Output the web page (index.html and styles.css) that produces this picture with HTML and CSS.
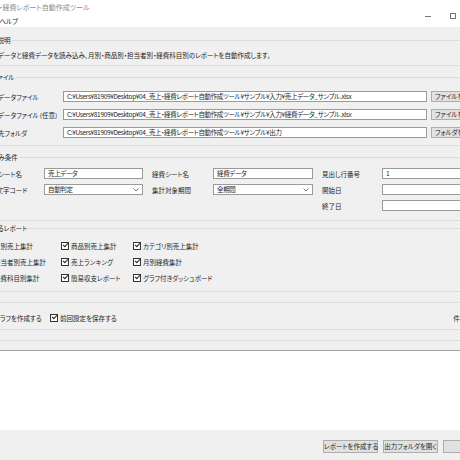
FILE: index.html
```html
<!DOCTYPE html>
<html lang="ja">
<head>
  <meta charset="UTF-8">
  <title>売上・経費レポート自動作成ツール</title>
  <link rel="stylesheet" href="styles.css">
</head>
<body>
  <div class="window">
    <header class="top">
      <div class="top-left">
        <div class="title">売上・経費レポート自動作成ツール</div>
        <nav class="menu"><span>ファイル</span><span>ヘルプ</span></nav>
      </div>
      <div class="controls">
        <span class="ctl"><svg width="6" height="6" viewBox="0 0 6 6"><path d="M0 3.5h6" stroke="#777" stroke-width="1"/></svg></span>
        <span class="ctl"><svg width="6" height="6" viewBox="0 0 6 6"><rect x="0.5" y="0.5" width="5" height="5" fill="none" stroke="#777" stroke-width="1"/></svg></span>
        <span class="ctl"><svg width="6" height="6" viewBox="0 0 6 6"><path d="M0 0l6 6M6 0l-6 6" stroke="#777" stroke-width="1"/></svg></span>
      </div>
    </header>

    <main class="content">
      <fieldset class="group g-desc">
        <legend>ツール説明</legend>
        <p class="desc">売上データと経費データを読み込み、月別・商品別・担当者別・経費科目別のレポートを自動作成します。</p>
      </fieldset>

      <fieldset class="group g-files">
        <legend>入力ファイル</legend>
        <div class="files">
          <span class="lbl">売上データファイル</span>
          <div class="field">C:¥Users¥81909¥Desktop¥04_売上・経費レポート自動作成ツール¥サンプル¥入力¥売上データ_サンプル.xlsx</div>
          <button class="btn">ファイルを選択</button>

          <span class="lbl">経費データファイル（任意）</span>
          <div class="field">C:¥Users¥81909¥Desktop¥04_売上・経費レポート自動作成ツール¥サンプル¥入力¥経費データ_サンプル.xlsx</div>
          <button class="btn">ファイルを選択</button>

          <span class="lbl">出力先フォルダ</span>
          <div class="field">C:¥Users¥81909¥Desktop¥04_売上・経費レポート自動作成ツール¥サンプル¥出力</div>
          <button class="btn">フォルダを選択</button>
        </div>
      </fieldset>

      <fieldset class="group g-cond">
        <legend>読み込み条件</legend>
        <div class="cond">
          <span class="lbl">売上シート名</span>
          <div class="field">売上データ</div>
          <span class="lbl pad">経費シート名</span>
          <div class="field">経費データ</div>
          <span class="lbl pad">見出し行番号</span>
          <div class="field">1</div>

          <span class="lbl">CSV文字コード</span>
          <div class="field combo">自動判定<svg class="chev" width="6" height="4" viewBox="0 0 6 4"><path d="M0.5 0.5l2.5 2.5l2.5-2.5" fill="none" stroke="#555" stroke-width="0.8"/></svg></div>
          <span class="lbl pad">集計対象期間</span>
          <div class="field combo">全期間<svg class="chev" width="6" height="4" viewBox="0 0 6 4"><path d="M0.5 0.5l2.5 2.5l2.5-2.5" fill="none" stroke="#555" stroke-width="0.8"/></svg></div>
          <span class="lbl pad">開始日</span>
          <div class="field"></div>

          <span class="lbl pad col5">終了日</span>
          <div class="field"></div>
        </div>
      </fieldset>

      <fieldset class="group g-reports">
        <legend>作成するレポート</legend>
        <div class="reports">
          <label class="chk"><span class="box"></span>月別売上集計</label>
          <label class="chk"><span class="box"></span>商品別売上集計</label>
          <label class="chk"><span class="box"></span>カテゴリ別売上集計</label>
          <label class="chk"><span class="box"></span>担当者別売上集計</label>
          <label class="chk"><span class="box"></span>売上ランキング</label>
          <label class="chk"><span class="box"></span>月別経費集計</label>
          <label class="chk"><span class="box"></span>経費科目別集計</label>
          <label class="chk"><span class="box"></span>簡易収支レポート</label>
          <label class="chk"><span class="box"></span>グラフ付きダッシュボード</label>
        </div>
      </fieldset>

      <fieldset class="group g-opts">
        <div class="opts">
          <label class="chk first"><span class="box"></span>グラフを作成する</label>
          <label class="chk"><span class="box"></span>前回設定を保存する</label>
          <span class="count">件数：0</span>
        </div>
      </fieldset>

      <div class="sep"></div>
      <div class="log"></div>

      <footer class="actions">
        <button class="btn wide">レポートを作成する</button>
        <button class="btn wide">出力フォルダを開く</button>
        <button class="btn wide">終了</button>
      </footer>
    </main>
  </div>
</body>
</html>
```

FILE: styles.css
```css
body {
  margin: 0;
  width: 460px;
  height: 460px;
  overflow: hidden;
  background: #f0f0f0;
  font-family: "Noto Sans CJK JP", "Noto Sans", sans-serif;
  font-feature-settings: "palt";
  font-size: 6.5px;
  line-height: 10px;
  color: #1e1e1e;
}

.window {
  margin-left: -30px;
  width: 540px;
  height: 460px;
}

/* title + menu */
.top {
  height: 27px;
  background: #fff;
  display: flex;
  justify-content: space-between;
}
.top-left {
  padding: 2px 0 0 15px;
}
.title {
  color: #8c8c8c;
  font-size: 7px;
}
.menu {
  display: flex;
  gap: 8px;
  margin: 4px 0 0 -16px;
}
.controls {
  display: flex;
  padding: 6px 20px 0 0;
}
.ctl {
  width: 25px;
  height: 20px;
  display: flex;
  align-items: center;
  justify-content: center;
}

/* group boxes */
.group {
  margin: 6px 6px 0;
  padding: 0 0 8px 8px;
  border: 1px solid #dcdcdc;
  min-width: 0;
}
.group legend {
  margin-left: -7px;
  padding: 0 1px;
  line-height: 10px;
}
.g-desc { margin-top: 8px; padding-bottom: 5px; }
.desc { margin: 5px 0 0; }

.g-files { padding-bottom: 7px; }
.g-cond { padding-bottom: 9px; }
.g-reports { margin-top: 2px; padding-bottom: 8px; }
.g-opts { margin-top: 10px; padding: 10px 0 6px 8px; }

.lbl {
  white-space: nowrap;
}
.field {
  box-sizing: border-box;
  height: 11px;
  border: 1px solid #9a9a9a;
  background: #fff;
  padding-left: 3px;
  line-height: 9px;
  letter-spacing: -0.35px;
  white-space: nowrap;
  overflow: hidden;
}
.combo {
  display: flex;
  align-items: center;
  justify-content: space-between;
  padding-right: 3px;
}
.btn {
  box-sizing: border-box;
  height: 11px;
  padding: 0 3px;
  border: 1px solid #adadad;
  background: #e1e1e1;
  font: inherit;
  line-height: 9px;
  color: inherit;
  text-align: left;
  white-space: nowrap;
}

.files {
  display: grid;
  grid-template-columns: 74px 364px 60px;
  column-gap: 4px;
  row-gap: 7px;
  align-items: center;
  margin-top: 9px;
}

.cond {
  display: grid;
  grid-template-columns: 59px 99px 70px 100px 69px 100px;
  row-gap: 5px;
  align-items: center;
  margin-top: 6px;
}
.cond .pad { padding-left: 9px; }
.cond .col5 { grid-column: 5; }

/* check boxes */
.chk {
  display: flex;
  align-items: center;
  gap: 2px;
  white-space: nowrap;
}
.box {
  position: relative;
  box-sizing: border-box;
  width: 8px;
  height: 8px;
  border: 1px solid #333;
  background: #fff;
}
.box::after {
  content: "";
  position: absolute;
  left: 1px;
  top: 0;
  width: 4px;
  height: 2px;
  border-left: 1px solid #222;
  border-bottom: 1px solid #222;
  transform: rotate(-45deg);
}

.reports {
  display: grid;
  grid-template-columns: 77px 72px auto;
  row-gap: 6px;
  margin: 8px 0 0 -1px;
}
.reports .chk { height: 10px; }

.opts {
  display: flex;
  align-items: center;
  height: 10px;
  margin-left: -1px;
}
.opts .first { width: 66px; }
.count {
  margin-left: auto;
  margin-right: 30px;
}

.sep {
  margin: 10px 6px 0;
  border-top: 1px solid #dcdcdc;
}
.log {
  margin-top: 9px;
  height: 79px;
  border-top: 1px solid #a0a0a0;
  background: #fff;
}

.actions {
  display: flex;
  justify-content: flex-end;
  gap: 5px;
  padding: 10px 12px 0 0;
}
.btn.wide {
  width: 55px;
  height: 13px;
  line-height: 11px;
  text-align: center;
  padding: 0;
}
```
